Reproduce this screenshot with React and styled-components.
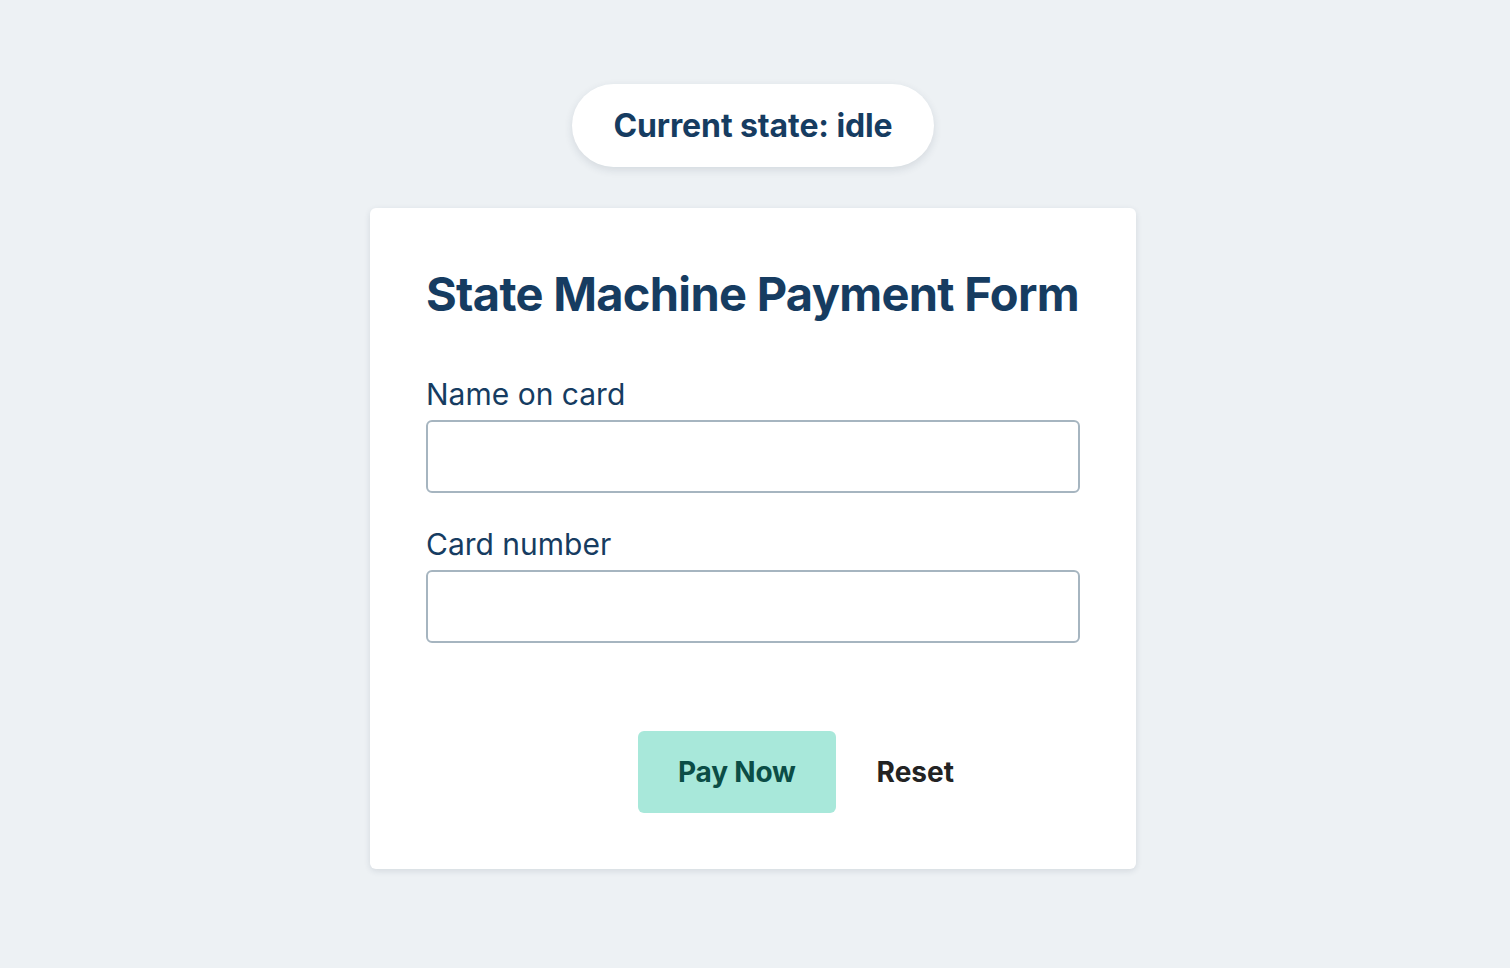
import React, { useState } from 'react';
import styled, { createGlobalStyle } from 'styled-components';

const GlobalStyle = createGlobalStyle`
  html, body {
    margin: 0;
    padding: 0;
    background: #edf1f4;
    font-family: Inter, "Noto Sans", sans-serif;
  }
`;

const Page = styled.main`
  min-height: 968px;
  box-sizing: border-box;
  padding: 84px 4px 0 0;
  display: flex;
  flex-direction: column;
  align-items: center;
`;

const StateBadge = styled.div`
  height: 83px;
  padding: 0 41px;
  box-sizing: border-box;
  display: flex;
  align-items: center;
  background: #fff;
  border-radius: 42px;
  box-shadow: 0 3px 8px rgba(30, 50, 70, 0.12);
  color: #163c61;
  font-size: 32px;
  font-weight: 700;
  letter-spacing: -0.1px;
`;

const Card = styled.form`
  margin-top: 41px;
  width: 766px;
  box-sizing: border-box;
  padding: 56px;
  background: #fff;
  border-radius: 6px;
  box-shadow: 0 2px 6px rgba(30, 50, 70, 0.12);
  display: flex;
  flex-direction: column;
`;

const Title = styled.h1`
  margin: 0 0 52px;
  color: #163c61;
  font-size: 47px;
  line-height: 60px;
  font-weight: 700;
  letter-spacing: -0.7px;
  white-space: nowrap;
`;

const Field = styled.label`
  display: flex;
  flex-direction: column;
  gap: 8px;
  margin-bottom: 33px;
  color: #163c61;
  font-size: 30px;
  line-height: 36px;
`;

const Input = styled.input`
  height: 73px;
  box-sizing: border-box;
  border: 2px solid #a6b5c0;
  border-radius: 6px;
  padding: 0 16px;
  font: inherit;
  color: #163c61;
  outline: none;
`;

const Actions = styled.div`
  margin-top: 55px;
  padding-left: 212px;
  display: flex;
  align-items: center;
`;

const Button = styled.button`
  height: 82px;
  border: none;
  border-radius: 6px;
  padding: 0 ${p => (p.$primary ? 40 : 41)}px;
  background: ${p => (p.$primary ? '#a8e8da' : 'transparent')};
  color: ${p => (p.$primary ? '#0b4d46' : '#232323')};
  font-family: inherit;
  font-size: 28px;
  font-weight: 700;
  letter-spacing: ${p => (p.$primary ? '-0.2px' : '0')};
  cursor: pointer;
`;

export default function App() {
  const [name, setName] = useState('');
  const [card, setCard] = useState('');

  return (
    <>
      <GlobalStyle />
      <Page>
        <StateBadge>Current state: idle</StateBadge>
        <Card onSubmit={e => e.preventDefault()}>
          <Title>State Machine Payment Form</Title>
          <Field>
            Name on card
            <Input value={name} onChange={e => setName(e.target.value)} />
          </Field>
          <Field>
            Card number
            <Input value={card} onChange={e => setCard(e.target.value)} />
          </Field>
          <Actions>
            <Button type="submit" $primary>Pay Now</Button>
            <Button type="button" onClick={() => { setName(''); setCard(''); }}>Reset</Button>
          </Actions>
        </Card>
      </Page>
    </>
  );
}
